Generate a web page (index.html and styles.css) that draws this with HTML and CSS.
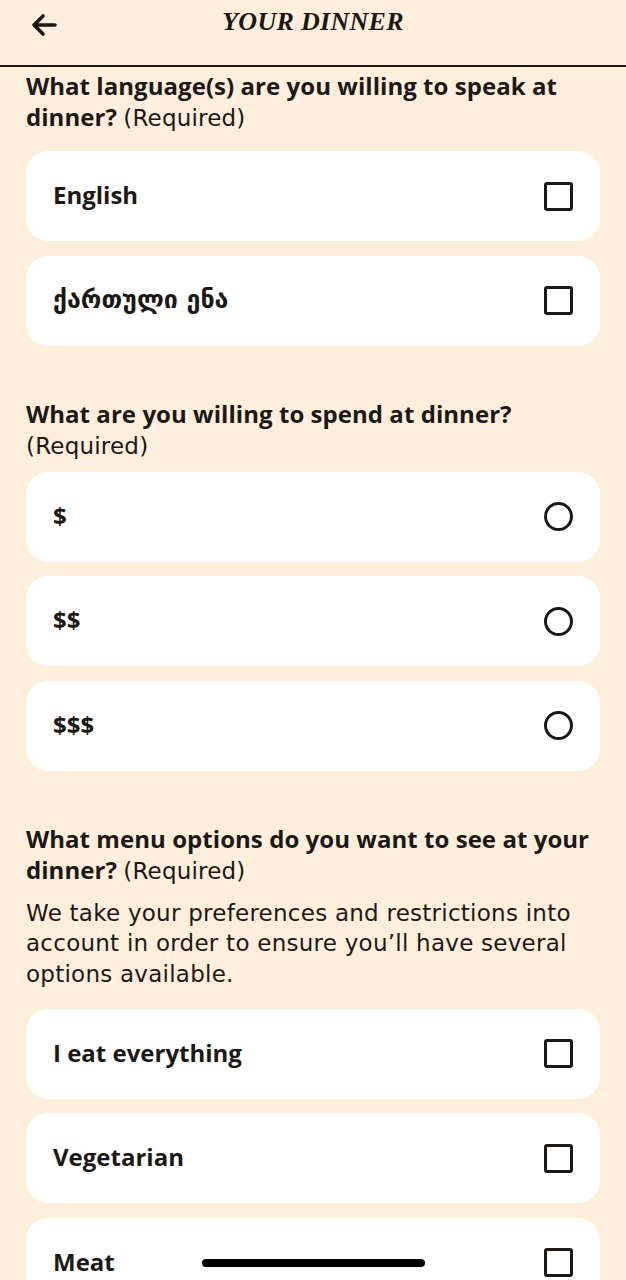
FILE: index.html
```html
<!DOCTYPE html>
<html lang="en">
<head>
    <meta charset="UTF-8">
    <meta name="viewport" content="width=device-width, initial-scale=1.0">
    <title>Your Dinner</title>
    <link rel="stylesheet" href="styles.css">
</head>
<body>
    <header class="topbar">
        <button class="back" aria-label="Back">
            <svg width="28" height="24" viewBox="0 0 28 24">
                <path d="M25 12H4M13 3l-9 9 9 9" fill="none" stroke="#1c1815" stroke-width="3.6" stroke-linecap="round" stroke-linejoin="round"/>
            </svg>
        </button>
        <h1 class="title">YOUR DINNER</h1>
    </header>

    <main class="content">
        <section class="question">
            <h2 class="q-title">What language(s) are you willing to speak at dinner? <span class="req">(Required)</span></h2>
            <div class="options">
                <label class="option"><span>English</span><span class="box"></span></label>
                <label class="option"><span class="ka">ქართული ენა</span><span class="box"></span></label>
            </div>
        </section>

        <section class="question">
            <h2 class="q-title tight">What are you willing to spend at dinner?<br><span class="req">(Required)</span></h2>
            <div class="options">
                <label class="option"><span>$</span><span class="radio"></span></label>
                <label class="option"><span>$$</span><span class="radio"></span></label>
                <label class="option"><span>$$$</span><span class="radio"></span></label>
            </div>
        </section>

        <section class="question">
            <h2 class="q-title">What menu options do you want to see at your dinner? <span class="req">(Required)</span></h2>
            <p class="desc">We take your preferences and restrictions into account in order to ensure you’ll have several options available.</p>
            <div class="options">
                <label class="option"><span>I eat everything</span><span class="box"></span></label>
                <label class="option"><span>Vegetarian</span><span class="box"></span></label>
                <label class="option"><span>Meat</span><span class="box"></span></label>
            </div>
        </section>
    </main>

    <div class="home-bar"></div>
</body>
</html>
```

FILE: styles.css
```css
body {
    margin: 0;
    padding: 0;
    background-color: #fdefdc;
    color: #1c1815;
    font-family: "Open Sans", sans-serif;
    height: 1280px;
    overflow: hidden;
}

.topbar {
    position: relative;
    height: 65px;
    border-bottom: 2px solid #1c1815;
    display: flex;
    justify-content: center;
}

.back {
    position: absolute;
    left: 30px;
    top: 13px;
    background: none;
    border: none;
    padding: 0;
}

.title {
    margin: 7px 0 0;
    font-family: "Liberation Serif", serif;
    font-style: italic;
    font-weight: bold;
    font-size: 26px;
    letter-spacing: 0.3px;
}

.content {
    padding: 3px 26px 0;
}

.question {
    margin-bottom: 52px;
}

.q-title {
    margin: 0 0 19px;
    font-size: 24px;
    line-height: 31px;
    font-weight: 700;
    letter-spacing: 0.05px;
}

.q-title.tight {
    margin-bottom: 12px;
}

.req {
    font-family: "DejaVu Sans", sans-serif;
    font-size: 23px;
    font-weight: 400;
    line-height: 1;
    letter-spacing: 0.2px;
}

.desc {
    margin: -6px 0 19px;
    font-family: "DejaVu Sans", sans-serif;
    font-size: 23px;
    line-height: 30.7px;
    letter-spacing: 0.25px;
}

.options {
    display: flex;
    flex-direction: column;
    gap: 14.5px;
}

.option {
    background: #ffffff;
    border-radius: 22px;
    height: 90px;
    display: flex;
    align-items: center;
    justify-content: space-between;
    padding: 0 27px;
    font-size: 24px;
    font-weight: 700;
}

.option span:first-child {
    margin-top: -3px;
}

.ka {
    font-family: "DejaVu Sans", sans-serif;
    font-size: 25px;
}

.box {
    width: 23px;
    height: 23px;
    border: 3px solid #1c1815;
    border-radius: 3px;
}

.radio {
    width: 23px;
    height: 23px;
    border: 3px solid #1c1815;
    border-radius: 50%;
}

.home-bar {
    position: fixed;
    left: 202px;
    top: 1259px;
    width: 223px;
    height: 8px;
    border-radius: 4px;
    background: #000;
}
```
